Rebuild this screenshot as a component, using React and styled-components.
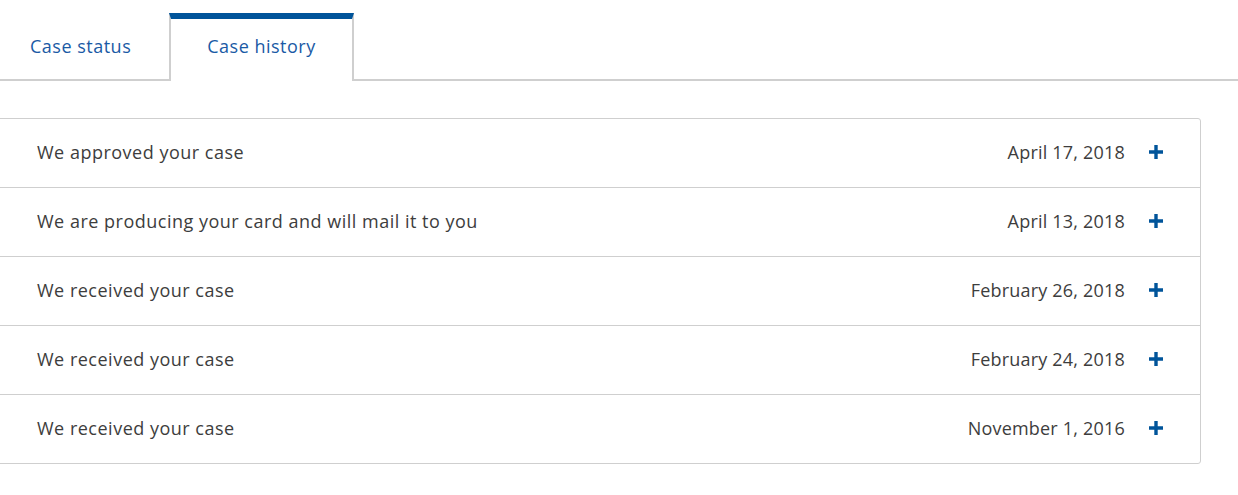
import React, { useState } from "react";
import styled, { createGlobalStyle } from "styled-components";

const GlobalStyle = createGlobalStyle`
  body {
    margin: 0;
    background: #ffffff;
    font-family: "Open Sans", "Liberation Sans", sans-serif;
  }
`;

const Page = styled.div`
  margin-left: -8px;
  width: 1209px;
  padding-top: 13px;
`;

const TabBar = styled.div`
  display: flex;
  border-bottom: 2px solid #cfcfcf;
  width: 1254px;
`;

const Tab = styled.button`
  box-sizing: border-box;
  display: flex;
  align-items: center;
  height: 68px;
  margin-bottom: -2px;
  padding: 0 36px 9px;
  background: ${(p) => (p.$active ? "#ffffff" : "transparent")};
  border: none;
  border-top: 6px solid ${(p) => (p.$active ? "#00549a" : "transparent")};
  border-left: 2px solid ${(p) => (p.$active ? "#cfcfcf" : "transparent")};
  border-right: 2px solid ${(p) => (p.$active ? "#cfcfcf" : "transparent")};
  color: #1a5aa5;
  font-family: inherit;
  font-size: 18px;
  letter-spacing: 0.5px;
  cursor: pointer;
`;

const Card = styled.div`
  margin-top: 37px;
  border: 1px solid #cfcfcf;
  border-radius: 3px;
`;

// 행 높이 68px + 구분선 1px
const Row = styled.div`
  display: flex;
  align-items: center;
  height: 66px;
  padding: 0 37px 2px 44px;
  border-top: ${(p) => (p.$first ? "none" : "1px solid #cfcfcf")};
  color: #3d3d3d;
  font-size: 18px;
  letter-spacing: 0.5px;
`;

const Title = styled.span`
  flex: 1;
`;

const Date = styled.span`
  margin-right: 24px;
  letter-spacing: 0.2px;
`;

const Plus = () => (
  <svg width="14" height="14" viewBox="0 0 14 14">
    <path d="M5.3 0h3.4v5.3H14v3.4H8.7V14H5.3V8.7H0V5.3h5.3z" fill="#00549a" />
  </svg>
);

const events = [
  ["We approved your case", "April 17, 2018"],
  ["We are producing your card and will mail it to you", "April 13, 2018"],
  ["We received your case", "February 26, 2018"],
  ["We received your case", "February 24, 2018"],
  ["We received your case", "November 1, 2016"],
];

const App = () => {
  const [tab, setTab] = useState("history");
  return (
    <Page>
      <GlobalStyle />
      <TabBar>
        <Tab $active={tab === "status"} onClick={() => setTab("status")}>
          Case status
        </Tab>
        <Tab $active={tab === "history"} onClick={() => setTab("history")}>
          Case history
        </Tab>
      </TabBar>
      <Card>
        {events.map(([title, date], i) => (
          <Row key={i} $first={i === 0}>
            <Title>{title}</Title>
            <Date>{date}</Date>
            <Plus />
          </Row>
        ))}
      </Card>
    </Page>
  );
};

export default App;
